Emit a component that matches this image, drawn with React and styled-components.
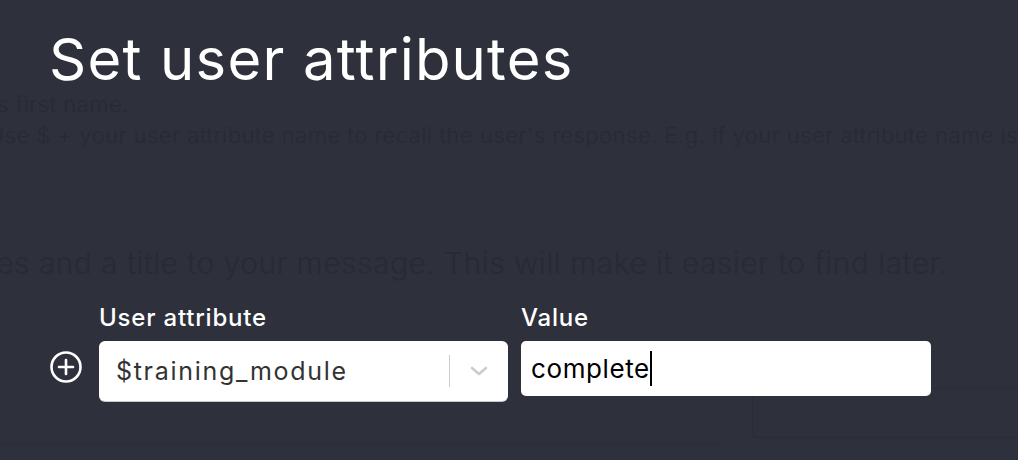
import React from "react";
import styled, { createGlobalStyle } from "styled-components";

const GlobalStyle = createGlobalStyle`
  html, body {
    margin: 0;
    padding: 0;
    background: #2e303b;
    overflow: hidden;
  }
  #root {
    width: 1018px;
    height: 460px;
  }
`;

const Screen = styled.div`
  position: relative;
  width: 1018px;
  height: 460px;
  overflow: hidden;
  background: #2e303b;
  font-family: Inter, "Open Sans", sans-serif;
`;

// page that sits behind the modal, barely visible
const GhostPage = styled.div`
  display: flex;
  flex-direction: column;
  padding-top: 89px;
  color: #282a34;
  white-space: nowrap;
`;

const GhostLine = styled.div`
  font-size: ${(p) => p.size || 21}px;
  font-weight: 300;
  letter-spacing: ${(p) => p.ls || 0}px;
  line-height: ${(p) => p.lh || 31}px;
  margin-left: ${(p) => p.shift || 0}px;
  margin-top: ${(p) => p.top || 0}px;
`;

const GhostBottom = styled.div`
  display: flex;
  align-items: flex-end;
  margin-top: 105px;
`;

const GhostRule = styled.div`
  width: 724px;
  height: 1px;
  background: #2a2c36;
`;

const GhostBox = styled.div`
  flex: 1;
  height: 48px;
  margin-left: 28px;
  margin-bottom: 7px;
  border: 1px solid #2a2c36;
  border-right: none;
  border-radius: 4px 0 0 4px;
`;

const Overlay = styled.div`
  position: absolute;
  inset: 0;
  display: flex;
  flex-direction: column;
  padding: 22px 0 0 49px;
`;

const Title = styled.h1`
  margin: 0;
  font-size: 58px;
  font-weight: 400;
  line-height: 74px;
  color: #ffffff;
  letter-spacing: 1.2px;
`;

const FormRow = styled.div`
  display: flex;
  align-items: flex-start;
  margin-top: 206px;
`;

const AddButton = styled.button`
  display: flex;
  align-items: center;
  justify-content: center;
  width: 34px;
  height: 34px;
  margin-top: 48px;
  padding: 0;
  border: none;
  background: none;
  cursor: pointer;
`;

const Field = styled.div`
  display: flex;
  flex-direction: column;
  margin-left: ${(p) => p.gap}px;
`;

const Label = styled.label`
  font-size: 24px;
  font-weight: 500;
  letter-spacing: 0.8px;
  color: #ffffff;
  line-height: 32px;
  margin-bottom: 7px;
`;

const Select = styled.div`
  display: flex;
  align-items: center;
  width: 409px;
  height: 60px;
  box-sizing: border-box;
  background: #ffffff;
  border-radius: 6px;
  box-shadow: 0 1px 0 #c9c9cc;
  padding-left: 17px;
`;

const SelectValue = styled.span`
  flex: 1;
  font-size: 25px;
  letter-spacing: 1.7px;
  color: #333333;
`;

const Separator = styled.span`
  width: 1px;
  height: 32px;
  background: #cccccc;
`;

const Chevron = styled.span`
  display: flex;
  align-items: center;
  justify-content: center;
  width: 58px;
`;

const Input = styled.div`
  display: flex;
  align-items: center;
  width: 410px;
  height: 55px;
  box-sizing: border-box;
  background: #ffffff;
  border-radius: 5px;
  padding-left: 10px;
  font-size: 26px;
  letter-spacing: 0.6px;
  color: #000000;
`;

const Caret = styled.span`
  display: inline-block;
  width: 2px;
  height: 35px;
  background: #000000;
`;

export default function App() {
  return (
    <Screen>
      <GlobalStyle />
      <GhostPage>
        <GhostLine size={22} ls={0.5} shift={-10}>'s first name.</GhostLine>
        <GhostLine size={22} ls={0.5} shift={-12}>
          Use $ + your user attribute name to recall the user's response. E.g. if your user attribute name is
        </GhostLine>
        <GhostLine size={30} ls={0.45} lh={40} top={92} shift={-4}>
          es and a title to your message. This will make it easier to find later.
        </GhostLine>
        <GhostBottom>
          <GhostRule />
          <GhostBox />
        </GhostBottom>
      </GhostPage>

      <Overlay>
        <Title>Set user attributes</Title>
        <FormRow>
          <AddButton aria-label="Add attribute">
            <svg width="34" height="34" viewBox="0 0 34 34" fill="none" stroke="#ffffff" strokeWidth="2.6" strokeLinecap="round">
              <circle cx="17" cy="17" r="14.5" />
              <line x1="17" y1="10" x2="17" y2="24" />
              <line x1="10" y1="17" x2="24" y2="17" />
            </svg>
          </AddButton>
          <Field gap={16}>
            <Label>User attribute</Label>
            <Select>
              <SelectValue>$training_module</SelectValue>
              <Separator />
              <Chevron>
                <svg width="20" height="12" viewBox="0 0 20 12" fill="none" stroke="#cccccc" strokeWidth="2.6" strokeLinecap="round" strokeLinejoin="round">
                  <polyline points="3,3 10,9 17,3" />
                </svg>
              </Chevron>
            </Select>
          </Field>
          <Field gap={13}>
            <Label>Value</Label>
            <Input>
              complete
              <Caret />
            </Input>
          </Field>
        </FormRow>
      </Overlay>
    </Screen>
  );
}
